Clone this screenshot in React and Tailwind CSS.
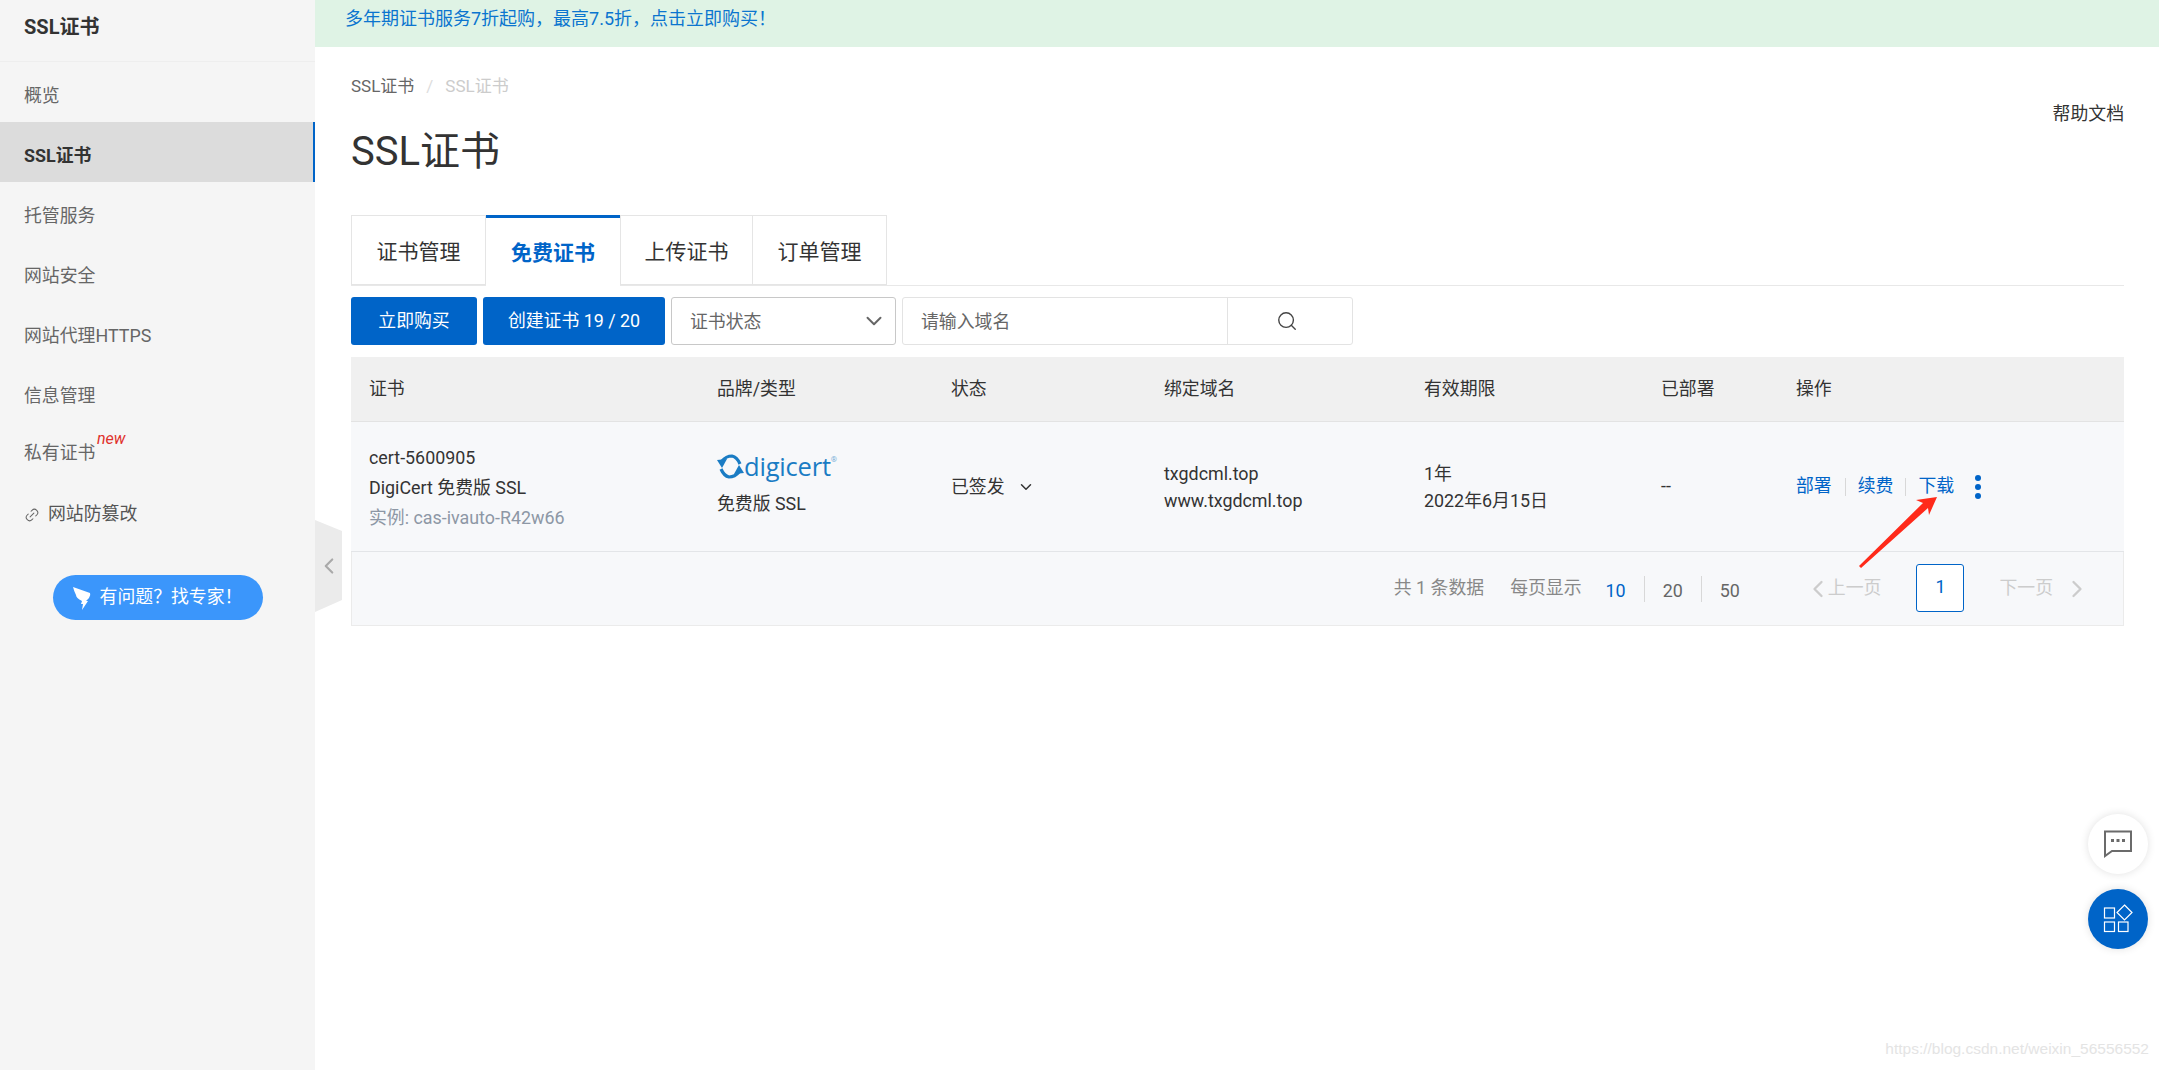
import { ChevronDown, ChevronLeft, ChevronRight, Link2, Search } from "lucide-react";

const FONT = "font-['Roboto','Noto_Sans_CJK_SC',sans-serif]";

const NavItem = ({ label, active = false }) => (
    <div
        className={`flex h-[60px] items-center px-6 pt-[9px] text-[17.875px] ${
            active
                ? "bg-[#dcdcdc] border-r-2 border-[#0064c8] font-bold text-[#333]"
                : "text-[#666]"
        }`}
    >
        {label}
    </div>
);

const Sidebar = () => (
    <aside className="relative w-[315px] shrink-0 bg-[#f5f5f5]">
        <div className="flex h-[62px] items-center border-b border-[#eeeeee] px-6 pb-2 text-[20px] font-bold text-[#333]">
            SSL证书
        </div>
        <nav>
            <NavItem label="概览" />
            <NavItem label="SSL证书" active />
            <NavItem label="托管服务" />
            <NavItem label="网站安全" />
            <NavItem label="网站代理HTTPS" />
            <NavItem label="信息管理" />
            <div className="flex h-[58px] items-center px-6 pt-[4px] text-[17.875px] text-[#666]">
                <span className="relative">
                    私有证书
                    <span className="absolute -top-[9px] left-[73px] text-[16px] italic leading-none text-[#e0312c]">
                        new
                    </span>
                </span>
            </div>
            <div className="flex h-[60px] items-center px-6 pt-[9px] text-[17.875px] text-[#555]">
                <Link2 size={16} strokeWidth={1.5} className="mr-[8px] -rotate-45 text-[#666]" />
                网站防篡改
            </div>
        </nav>
        <button className="mx-auto mt-[35px] flex h-[45px] w-[210px] items-center justify-center gap-[9px] rounded-full bg-[#3b96fb] text-[17.875px] text-white">
            <svg width="18" height="24" viewBox="0 0 18 24" fill="#fff">
                <path d="M0 1 L17 7 Q18 9 16 12 L13 15 H15 L9 24 L10 18 H8 L9 15 Q3 12 3 9 Q1 5 0 1Z" />
            </svg>
            有问题？找专家！
        </button>
    </aside>
);

const DigicertLogo = () => (
    <div className="flex h-[28px] items-center text-[#1a7cc4]">
        <svg width="27" height="27" viewBox="0 0 27 27" fill="none" stroke="#1a7cc4" strokeWidth="3.2">
            <path d="M5 8 Q9 3 15 3 Q20 4 23 11" />
            <path d="M22 19 Q18 24 12 24 Q7 23 4 16" />
            <path d="M0 7 L10 6 L5 15Z" fill="#1a7cc4" stroke="none" />
            <path d="M27 20 L17 21 L22 12Z" fill="#1a7cc4" stroke="none" />
        </svg>
        <span className="font-['Open_Sans',sans-serif] text-[25.5px] leading-none tracking-[-0.2px]">digicert</span>
        <span className="-mt-[14px] text-[8px] leading-none opacity-60">®</span>
    </div>
);

const Th = ({ children }) => <div className="text-[17.875px] text-[#333]">{children}</div>;

const PageSize = ({ value, active, last }) => (
    <span
        className={`flex h-[26px] items-center px-[18px] pt-[6px] text-[17.875px] ${
            active ? "text-[#0064c8]" : "text-[#666]"
        } ${last ? "" : "border-r border-[#d8d8d8]"}`}
    >
        {value}
    </span>
);

export default function App() {
    return (
        <div className={`relative flex h-screen w-full overflow-hidden bg-white ${FONT}`}>
            <Sidebar />

            {/* collapse handle */}
            <div className="absolute left-[315px] top-[520px] flex h-[92px] w-[27px] items-center justify-center bg-[#ebebeb] [clip-path:polygon(0_0,100%_12%,100%_87%,0_100%)]">
                <ChevronLeft size={26} strokeWidth={2} className="text-[#aaa]" />
            </div>

            <main className="min-w-0 flex-1">
                <div className="flex h-[47px] items-center bg-[#dff3e5] pb-[10px] pl-[30px] text-[18px] text-[#0b75cf]">
                    多年期证书服务7折起购，最高7.5折，点击立即购买！
                </div>

                <div className="pl-[36px] pr-[35px] pt-[28px]">
                    <div className="flex justify-between">
                        <div>
                            <div className="flex h-[24px] items-center text-[17px] text-[#666]">
                                SSL证书
                                <span className="mx-[12px] text-[#ddd]">/</span>
                                <span className="text-[#ccc]">SSL证书</span>
                            </div>
                            <h1 className="mt-[28px] text-[40px] font-normal leading-[50px] text-[#333]">SSL证书</h1>
                        </div>
                        <a className="mt-[27px] text-[17.875px] leading-[24px] text-[#333]">帮助文档</a>
                    </div>

                    <div className="mt-[38px] flex h-[71px] border-b border-[#e8e8e8] text-[21px]">
                        <div className="flex h-[70px] w-[135px] items-center justify-center border border-[#e5e5e5] pt-[5px] text-[#333]">证书管理</div>
                        <div className="flex h-[71px] w-[134px] items-center justify-center border-t-[3px] border-[#0064c8] bg-white pt-[3px] font-bold text-[#0064c8]">免费证书</div>
                        <div className="flex h-[70px] w-[133px] items-center justify-center border border-[#e5e5e5] pt-[5px] text-[#333]">上传证书</div>
                        <div className="flex h-[70px] w-[134px] items-center justify-center border border-l-0 border-[#e5e5e5] pt-[5px] text-[#333]">订单管理</div>
                    </div>

                    <div className="mt-[11px] flex h-[48px] gap-[6px] text-[17.875px]">
                        <button className="w-[126px] rounded-[3px] bg-[#0064c8] pt-[1px] text-white">立即购买</button>
                        <button className="w-[182px] rounded-[3px] bg-[#0064c8] pt-[1px] text-white">创建证书 19 / 20</button>
                        <div className="flex w-[225px] items-center justify-between rounded-[3px] border border-[#c8c8c8] pl-[18px] pr-[8px] text-[#666]">
                            <span className="pt-[2px]">证书状态</span>
                            <ChevronDown size={26} strokeWidth={1.8} className="text-[#666]" />
                        </div>
                        <div className="flex w-[451px] rounded-[3px] border border-[#e3e3e3]">
                            <div className="flex flex-1 items-center pl-[18px] pt-[2px] text-[#666]">请输入域名</div>
                            <div className="flex w-[125px] items-center justify-center border-l border-[#e3e3e3] pr-[6px]">
                                <Search size={22} strokeWidth={1.5} className="text-[#444]" />
                            </div>
                        </div>
                    </div>

                    <div className="mt-[12px] text-[17.875px] text-[#333]">
                        <div className="grid h-[65px] grid-cols-[348px_234px_213px_260px_237px_135px_1fr] items-center border-b border-[#e3e3e3] bg-[#f0f0f0] pl-[18px]">
                            <Th>证书</Th>
                            <Th>品牌/类型</Th>
                            <Th>状态</Th>
                            <Th>绑定域名</Th>
                            <Th>有效期限</Th>
                            <Th>已部署</Th>
                            <Th>操作</Th>
                        </div>

                        <div className="relative grid h-[130px] grid-cols-[348px_234px_213px_260px_237px_135px_1fr] items-center border-b border-[#e3e5e8] bg-[#f7f8fa] pl-[18px]">
                            <div className="pt-[2px] leading-[30px]">
                                <div>cert-5600905</div>
                                <div>DigiCert 免费版 SSL</div>
                                <div className="text-[#8d97a5]">实例: cas-ivauto-R42w66</div>
                            </div>
                            <div className="-mt-[2px]">
                                <DigicertLogo />
                                <div className="mt-[8px] leading-[30px]">免费版 SSL</div>
                            </div>
                            <div className="flex items-center pt-[1px]">
                                已签发
                                <ChevronDown size={18} strokeWidth={2} className="ml-[12px] text-[#333]" />
                            </div>
                            <div className="leading-[27px]">
                                <div>txgdcml.top</div>
                                <div>www.txgdcml.top</div>
                            </div>
                            <div className="leading-[27px]">
                                <div>1年</div>
                                <div>2022年6月15日</div>
                            </div>
                            <div>--</div>
                            <div className="flex items-center text-[#0064c8]">
                                <span>部署</span>
                                <span className="ml-[13px] mr-[12px] h-[18px] w-px bg-[#d8d8d8]" />
                                <span>续费</span>
                                <span className="ml-[12px] mr-[12px] h-[18px] w-px bg-[#d8d8d8]" />
                                <span>下载</span>
                                <span className="ml-[21px] flex flex-col gap-[3px]">
                                    <i className="block h-[6px] w-[6px] rounded-full bg-[#0064c8]" />
                                    <i className="block h-[6px] w-[6px] rounded-full bg-[#0064c8]" />
                                    <i className="block h-[6px] w-[6px] rounded-full bg-[#0064c8]" />
                                </span>
                            </div>
                        </div>

                        <div className="flex h-[74px] items-center justify-end border-x border-b border-[#ebebeb] bg-[#f7f8fa] pr-[32px]">
                            <span className="text-[#888]">共 1 条数据</span>
                            <span className="ml-[26px] text-[#888]">每页显示</span>
                            <span className="ml-[6px] flex items-center">
                                <PageSize value="10" active />
                                <PageSize value="20" />
                                <PageSize value="50" last />
                            </span>
                            <span className="ml-[52px] flex items-center text-[#ccc]">
                                <ChevronLeft size={28} strokeWidth={2} className="-ml-[6px]" />
                                <span className="-ml-[4px]">上一页</span>
                            </span>
                            <span className="-mt-[2px] ml-[35px] flex h-[48px] w-[48px] items-center justify-center rounded-[3px] border border-[#0064c8] bg-white text-[#0064c8]">1</span>
                            <span className="ml-[35px] flex items-center text-[#ccc]">
                                下一页
                                <ChevronRight size={28} strokeWidth={2} className="ml-[10px]" />
                            </span>
                        </div>
                    </div>
                </div>
            </main>

            {/* annotation arrow */}
            <svg className="pointer-events-none absolute left-[1855px] top-[490px]" width="90" height="82" viewBox="0 0 90 82">
                <polygon points="82,7 61,10 68,13 4,76 6,78 73,18 74,25" fill="#ff2a1a" />
            </svg>

            <div className="absolute bottom-[121px] right-[11px] flex flex-col gap-[15px]">
                <button className="flex h-[60px] w-[60px] items-center justify-center rounded-full bg-white shadow-[0_0_8px_rgba(0,0,0,0.12)]">
                    <svg width="28" height="28" viewBox="0 0 28 28" fill="none" stroke="#6b6b6b" strokeWidth="2">
                        <path d="M1 1.5 H27 V21 H8 L1 26Z" />
                        <rect x="7" y="9" width="3" height="3" fill="#6b6b6b" stroke="none" />
                        <rect x="12.5" y="9" width="3" height="3" fill="#6b6b6b" stroke="none" />
                        <rect x="18" y="9" width="3" height="3" fill="#6b6b6b" stroke="none" />
                    </svg>
                </button>
                <button className="flex h-[60px] w-[60px] items-center justify-center rounded-full bg-[#0064c8] shadow-[0_0_8px_rgba(0,0,0,0.12)]">
                    <svg width="30" height="30" viewBox="0 0 30 30" fill="none" stroke="#fff" strokeWidth="1.2">
                        <rect x="1.5" y="4" width="10" height="10" />
                        <rect x="1.5" y="18" width="10" height="9.5" />
                        <rect x="15.5" y="18" width="9.5" height="9.5" />
                        <path d="M21.5 1 L29 8.5 L21.5 16 L14 8.5Z" />
                    </svg>
                </button>
            </div>

            <div className="pointer-events-none absolute bottom-[10px] right-[10px] font-['Liberation_Sans',sans-serif] text-[15.5px] text-[#e4e4e4]">
                https://blog.csdn.net/weixin_56556552
            </div>
        </div>
    );
}
